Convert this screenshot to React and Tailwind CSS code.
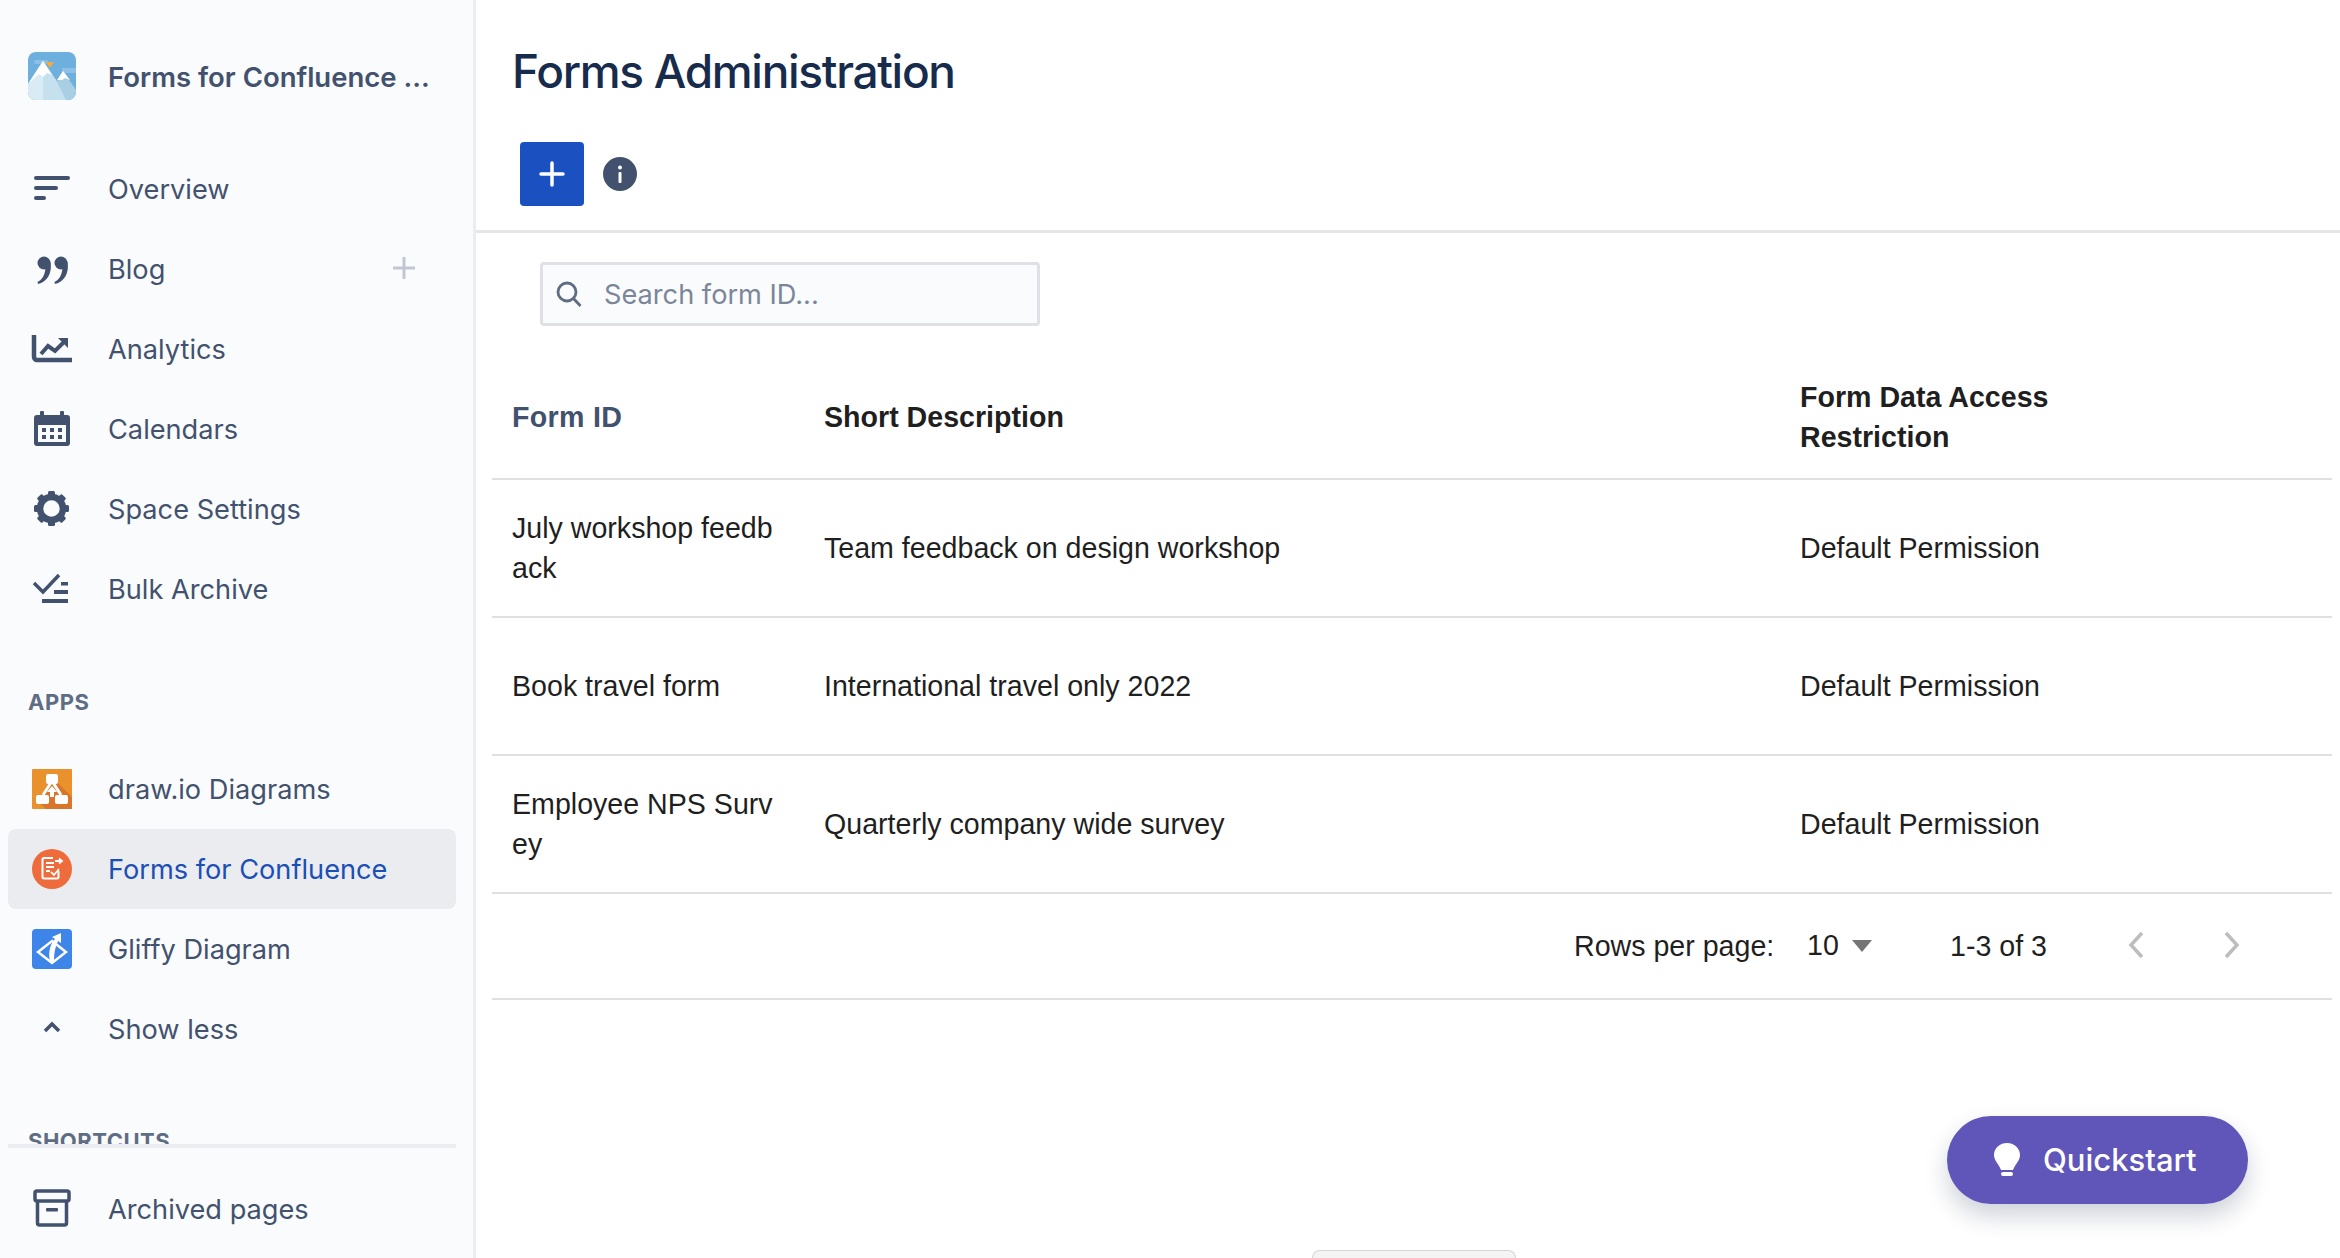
// App.jsx
const navItems = [
  { label: "Overview", icon: <OverviewIcon /> },
  { label: "Blog", icon: <QuoteIcon />, add: true },
  { label: "Analytics", icon: <AnalyticsIcon /> },
  { label: "Calendars", icon: <CalendarIcon /> },
  { label: "Space Settings", icon: <GearIcon /> },
  { label: "Bulk Archive", icon: <BulkIcon /> },
];

const appItems = [
  { label: "draw.io Diagrams", icon: <DrawioIcon /> },
  { label: "Forms for Confluence", icon: <FormsIcon />, active: true },
  { label: "Gliffy Diagram", icon: <GliffyIcon /> },
  { label: "Show less", icon: <ChevronUpIcon /> },
];

const rows = [
  { id: "July workshop feedback", desc: "Team feedback on design workshop" },
  { id: "Book travel form", desc: "International travel only 2022" },
  { id: "Employee NPS Survey", desc: "Quarterly company wide survey" },
];

function Svg({ children }) {
  return (
    <svg width="44" height="44" viewBox="0 0 44 44" fill="#42526e" className="shrink-0">
      {children}
    </svg>
  );
}

function OverviewIcon() {
  return (
    <Svg>
      <rect x="4" y="9" width="36" height="4" rx="2" />
      <rect x="4" y="19" width="24" height="4" rx="2" />
      <rect x="4" y="29" width="12" height="4" rx="2" />
    </Svg>
  );
}

function QuoteIcon() {
  return (
    <Svg>
      <circle cx="14" cy="16" r="6.500" />
      <path d="M20.500 15C22.500 26 17 35 8 37L7.500 35C12 33 15 28 15.500 21Z" />
      <circle cx="31" cy="16" r="6.500" />
      <path d="M37.500 15C39.500 26 34 35 25 37L24.500 35C29 33 32 28 32.500 21Z" />
    </Svg>
  );
}

function AnalyticsIcon() {
  return (
    <Svg>
      <path d="M4 8V30a3 3 0 0 0 3 3H42" fill="none" stroke="#42526e" strokeWidth="4.500" />
      <path d="M11 27L18 19L25 24L36 13" fill="none" stroke="#42526e" strokeWidth="4" />
      <path d="M28 11H38V21Z" />
    </Svg>
  );
}

function CalendarIcon() {
  return (
    <Svg>
      <rect x="4" y="8" width="36" height="31" rx="3" />
      <rect x="10" y="4" width="4" height="6" rx="1" />
      <rect x="30" y="4" width="4" height="6" rx="1" />
      <rect x="8" y="18" width="28" height="17" fill="#fafbfc" />
      <rect x="12" y="21" width="4" height="4" />
      <rect x="20" y="21" width="4" height="4" />
      <rect x="28" y="21" width="4" height="4" />
      <rect x="12" y="28" width="4" height="4" />
      <rect x="20" y="28" width="4" height="4" />
      <rect x="28" y="28" width="4" height="4" />
    </Svg>
  );
}

function GearIcon() {
  return (
    <Svg>
      {[0, 45, 90, 135, 180, 225, 270, 315].map((a) => (
        <rect key={a} x="18" y="4" width="7" height="7" rx="1.500" transform={`rotate(${a} 21.500 21.500)`} />
      ))}
      <circle cx="21.500" cy="21.500" r="11.500" fill="none" stroke="#42526e" strokeWidth="6.500" />
    </Svg>
  );
}

function BulkIcon() {
  return (
    <Svg>
      <path d="M4 16L13 25L29 8" fill="none" stroke="#42526e" strokeWidth="3.500" />
      <rect x="31" y="15" width="7" height="3.500" />
      <rect x="24" y="23" width="14" height="4" />
      <rect x="12" y="32" width="26" height="4" />
    </Svg>
  );
}

function ChevronUpIcon() {
  return (
    <Svg>
      <path d="M15 24L22 17L29 24" fill="none" stroke="#42526e" strokeWidth="3.500" />
    </Svg>
  );
}

function ArchiveIcon() {
  return (
    <Svg>
      <rect x="5" y="4" width="34" height="10" rx="2" fill="none" stroke="#42526e" strokeWidth="3.500" />
      <path d="M7.500 13V36a2 2 0 0 0 2 2H34.500a2 2 0 0 0 2-2V13" fill="none" stroke="#42526e" strokeWidth="3.500" />
      <rect x="16" y="21" width="12" height="3.500" rx="1" />
    </Svg>
  );
}

function LogoIcon() {
  return (
    <svg width="48" height="48" viewBox="0 0 48 48" className="shrink-0">
      <rect width="48" height="48" rx="8" fill="#6db0de" />
      <rect x="6" y="8" width="14" height="4" rx="2" fill="#8cc0e6" />
      <rect x="34" y="16" width="14" height="5" fill="#8cc0e6" />
      <path d="M0 32L15 9L32 34L38 48H8a8 8 0 0 1-8-8Z" fill="#d9ebf5" />
      <path d="M15 9L32 34L38 48H15Z" fill="#c5e0ef" />
      <path d="M22 16L26 10H18Z" fill="#f2ad3d" />
      <path d="M0 32L15 9L24 23L19 21L15 25L11 22L5 27L0 32Z" fill="#ffffff" />
      <path d="M29 30L35 19L48 38V40a8 8 0 0 1-8 8H38Z" fill="#a9cfe3" />
      <path d="M29 28L35 19L42 28L37 26L34 28Z" fill="#ffffff" />
    </svg>
  );
}

function DrawioIcon() {
  return (
    <svg width="44" height="44" viewBox="0 0 44 44" className="shrink-0">
      <rect x="2" y="2" width="40" height="40" rx="1" fill="#e8912d" />
      <path d="M8 34L22 10L42 30V42H16Z" fill="#d9762a" />
      <path d="M22 14L13 28M22 14L31 28" stroke="#fff" strokeWidth="3" fill="none" />
      <path d="M22 19L27 25H24V30H20V25H17Z" fill="#fff" />
      <rect x="16" y="7" width="12" height="10" rx="2" fill="#fff" />
      <rect x="6" y="28" width="13" height="9" rx="2" fill="#fff" />
      <rect x="25" y="28" width="13" height="9" rx="2" fill="#fff" />
    </svg>
  );
}

function FormsIcon() {
  return (
    <svg width="44" height="44" viewBox="0 0 44 44" className="shrink-0">
      <circle cx="22" cy="22" r="20" fill="#ee6b3b" />
      <path d="M23 11H14a1.500 1.500 0 0 0-1.500 1.500V30a1.500 1.500 0 0 0 1.500 1.500H27a1.500 1.500 0 0 0 1.500-1.500V24" fill="none" stroke="#fff" strokeWidth="2" />
      <path d="M16 16H24M16 20H24M16 24H20" stroke="#fff" strokeWidth="2" />
      <path d="M25 14H31M29 11.500L32 14L29 16.500" fill="none" stroke="#fff" strokeWidth="1.800" />
      <path d="M21 25L24 28L29 22" fill="none" stroke="#fff" strokeWidth="1.800" />
    </svg>
  );
}

function GliffyIcon() {
  return (
    <svg width="44" height="44" viewBox="0 0 44 44" className="shrink-0">
      <rect x="2" y="2" width="40" height="40" rx="4" fill="#3d85e8" />
      <path d="M22 14L36 25L22 36L8 25Z" fill="none" stroke="#fff" strokeWidth="2.500" />
      <path d="M20 34C18 26 20 17 25 12L22 10L31 6L31 16L28 14C25 20 24 27 24 33L22 37Z" fill="#fff" />
    </svg>
  );
}

function NavRow({ item }) {
  return (
    <div
      className={`relative flex h-[80px] w-[448px] items-center gap-[34px] rounded-lg pl-[22px] ${
        item.active ? "bg-[#ebecf0] text-[#1a4fb5]" : "text-[#42526e]"
      }`}
    >
      {item.icon}
      <span className="translate-y-px whitespace-nowrap">{item.label}</span>
      {item.add && (
        <svg width="24" height="24" viewBox="0 0 24 24" className="absolute right-[40px] top-[27px]">
          <path d="M12 1V23M1 12H23" stroke="#c1c7d0" strokeWidth="3" />
        </svg>
      )}
    </div>
  );
}

function Sidebar() {
  return (
    <aside className="flex h-full w-[476px] shrink-0 flex-col border-r-[3px] border-[#ebecf0] bg-[#fafbfc] font-['Inter',sans-serif] text-[27.2px]">
      <div className="flex h-[149px] shrink-0 items-start gap-[32px] pl-[28px] pt-[52px]">
        <LogoIcon />
        <span className="mt-[5px] whitespace-nowrap text-[27.5px] font-semibold text-[#42526e]">Forms for Confluence ...</span>
      </div>
      <div className="h-[995px] shrink-0 overflow-hidden pl-[8px]">
        {navItems.map((item) => (
          <NavRow key={item.label} item={item} />
        ))}
        <div className="flex h-[120px] items-start pl-[20px] pt-[57px] text-[22px] font-bold tracking-[0.5px] text-[#5e6c84]">
          APPS
        </div>
        {appItems.map((item) => (
          <NavRow key={item.label} item={item} />
        ))}
        <div className="pl-[20px] pt-[56px] text-[22px] font-bold tracking-[0.5px] text-[#5e6c84]">SHORTCUTS</div>
      </div>
      <div className="mx-[8px] h-[4px] w-[448px] shrink-0 bg-[#ebecf0]" />
      <div className="pl-[8px] pt-[21px]">
        <NavRow item={{ label: "Archived pages", icon: <ArchiveIcon /> }} />
      </div>
    </aside>
  );
}

function FormsTable() {
  return (
    <table className="ml-[16px] mr-[8px] w-[1840px] table-fixed border-collapse font-['Liberation_Sans',sans-serif] text-[28.6px] leading-[40px] text-[#1f1f1f]">
      <colgroup>
        <col className="w-[312px]" />
        <col className="w-[976px]" />
        <col className="w-[552px]" />
      </colgroup>
      <thead>
        <tr className="h-[134px] border-b-2 border-[#e0e0e0] text-left font-bold">
          <th className="px-[20px] pt-[10px] tracking-[0.3px] text-[#42526e]">Form ID</th>
          <th className="px-[20px] pt-[10px]">Short Description</th>
          <th className="px-[20px] pt-[10px]">
            Form Data Access
            <br />
            Restriction
          </th>
        </tr>
      </thead>
      <tbody>
        {rows.map((row) => (
          <tr key={row.id} className="h-[138px] border-b-2 border-[#e0e0e0]">
            <td className="break-all px-[20px]">{row.id}</td>
            <td className="px-[20px]">{row.desc}</td>
            <td className="px-[20px]">Default Permission</td>
          </tr>
        ))}
      </tbody>
    </table>
  );
}

function Pagination() {
  return (
    <div className="ml-[16px] flex h-[106px] w-[1840px] items-center border-b-2 border-[#e0e0e0] pl-[1082px] font-['Liberation_Sans',sans-serif] text-[28.6px] text-[#1f1f1f]">
      <span className="w-[233px] whitespace-nowrap">Rows per page:</span>
      <span className="w-[45px] -translate-y-px">10</span>
      <svg width="20" height="12" viewBox="0 0 20 12" className="shrink-0">
        <path d="M0 0H20L10 12Z" fill="#757575" />
      </svg>
      <span className="ml-[78px] w-[178px] whitespace-nowrap">1-3 of 3</span>
      <svg width="16" height="28" viewBox="0 0 16 28" className="-translate-y-px shrink-0">
        <path d="M14 2L3 14L14 26" fill="none" stroke="#bdbdbd" strokeWidth="3.500" />
      </svg>
      <svg width="16" height="28" viewBox="0 0 16 28" className="ml-[80px] -translate-y-px shrink-0">
        <path d="M2 2L13 14L2 26" fill="none" stroke="#bdbdbd" strokeWidth="3.500" />
      </svg>
    </div>
  );
}

export default function App() {
  return (
    <div className="flex h-screen w-full overflow-hidden bg-white">
      <Sidebar />
      <main className="relative min-w-0 flex-1">
        <div className="h-[233px] border-b-[3px] border-[#e4e6ea] pl-[36px] pt-[40px]">
          <h1 className="font-['Inter',sans-serif] text-[46px] font-medium leading-[62px] tracking-[-1.3px] text-[#172b4d]">
            Forms Administration
          </h1>
          <div className="mt-[40px] flex items-center gap-[19px] pl-[8px]">
            <button className="flex h-[64px] w-[64px] items-center justify-center rounded-[4px] bg-[#1a50c0]">
              <svg width="26" height="26" viewBox="0 0 26 26">
                <path d="M13 2V24M2 13H24" stroke="#fff" strokeWidth="3.500" strokeLinecap="round" />
              </svg>
            </button>
            <svg width="34" height="34" viewBox="0 0 34 34" className="shrink-0">
              <circle cx="17" cy="17" r="17" fill="#42526e" />
              <rect x="15.500" y="15" width="3" height="11" rx="1" fill="#fff" />
              <circle cx="17" cy="10.500" r="2" fill="#fff" />
            </svg>
          </div>
        </div>
        <div className="pl-[64px] pt-[29px]">
          <label className="flex h-[64px] w-[500px] items-center gap-[22px] rounded-[4px] border-[3px] border-[#dfe1e6] bg-[#fafbfc] pl-[13px]">
            <svg width="26" height="26" viewBox="0 0 26 26" fill="none" stroke="#5e6c84" strokeWidth="2.800" className="shrink-0">
              <circle cx="11" cy="11" r="9" />
              <path d="M17.500 17.500L24.500 25" />
            </svg>
            <input
              placeholder="Search form ID..."
              className="w-[400px] translate-y-px bg-transparent font-['Inter',sans-serif] text-[27.2px] text-[#172b4d] outline-none placeholder:text-[#7a869a]"
            />
          </label>
        </div>
        <div className="pt-[19px]">
          <FormsTable />
          <Pagination />
        </div>
        <button className="absolute left-[1471px] top-[1116px] flex h-[88px] w-[301px] items-center gap-[22px] rounded-[44px] bg-[#6055b8] pl-[46px] font-['Inter',sans-serif] text-[31px] font-medium text-white shadow-[0_12px_24px_rgba(9,30,66,0.2)]">
          <svg width="28" height="34" viewBox="0 0 28 34" className="shrink-0">
            <path d="M14 0C6 0 1 6 1 12C1 18 6 21 8 27H20C22 21 27 18 27 12C27 6 22 0 14 0Z" fill="#fff" />
            <rect x="8" y="29" width="12" height="4" rx="2" fill="#fff" />
          </svg>
          Quickstart
        </button>
        <div className="absolute bottom-0 left-[836px] h-[8px] w-[204px] rounded-t-xl border border-b-0 border-[#d5d5d5] bg-[#f4f4f4]" />
      </main>
    </div>
  );
}
